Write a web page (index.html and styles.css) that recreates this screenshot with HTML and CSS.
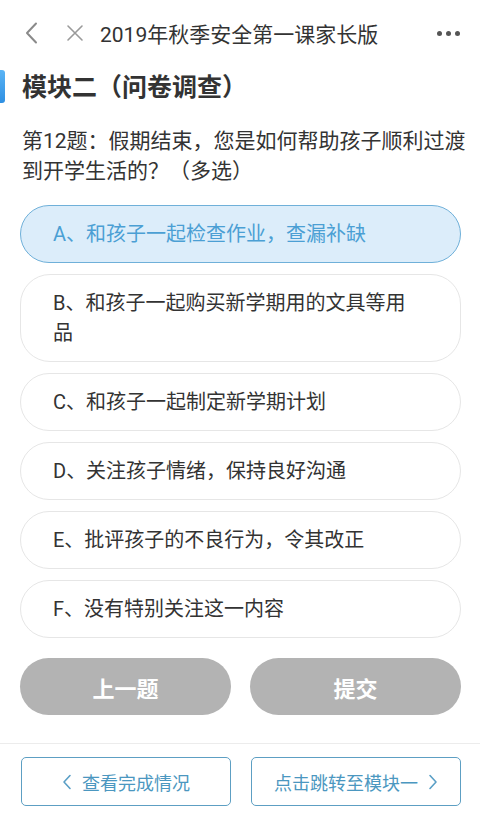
FILE: index.html
```html
<!DOCTYPE html>
<html lang="zh-CN">
<head>
<meta charset="utf-8">
<title>2019年秋季安全第一课家长版</title>
<link rel="stylesheet" href="styles.css">
</head>
<body>
<div class="page">
  <header class="nav">
    <span class="nav-icon back">
      <svg width="14" height="22" viewBox="0 0 14 22"><path d="M12 1.5 L3 11 L12 20.5" fill="none" stroke="#8a8a8a" stroke-width="2" stroke-linecap="round" stroke-linejoin="round"/></svg>
    </span>
    <span class="nav-icon close">
      <svg width="18" height="18" viewBox="0 0 18 18"><path d="M2 2 L16 16 M16 2 L2 16" fill="none" stroke="#9a9a9a" stroke-width="1.6" stroke-linecap="round"/></svg>
    </span>
    <span class="nav-title">2019年秋季安全第一课家长版</span>
    <span class="nav-more"><i></i><i></i><i></i></span>
  </header>

  <h1 class="module"><span class="module-bar"></span><span class="module-text">模块二（问卷调查）</span></h1>

  <p class="question">第12题：假期结束，您是如何帮助孩子顺利过渡到开学生活的？（多选）</p>

  <ul class="options">
    <li class="option selected">A、和孩子一起检查作业，查漏补缺</li>
    <li class="option">B、和孩子一起购买新学期用的文具等用品</li>
    <li class="option">C、和孩子一起制定新学期计划</li>
    <li class="option">D、关注孩子情绪，保持良好沟通</li>
    <li class="option">E、批评孩子的不良行为，令其改正</li>
    <li class="option">F、没有特别关注这一内容</li>
  </ul>

  <div class="actions">
    <button class="btn-gray">上一题</button>
    <button class="btn-gray">提交</button>
  </div>

  <footer class="footer">
    <button class="btn-outline">
      <svg width="10" height="16" viewBox="0 0 10 16"><path d="M8 1.5 L2 8 L8 14.5" fill="none" stroke="#5a9fc6" stroke-width="1.6" stroke-linecap="round" stroke-linejoin="round"/></svg>
      <span>查看完成情况</span>
    </button>
    <button class="btn-outline">
      <span>点击跳转至模块一</span>
      <svg width="10" height="16" viewBox="0 0 10 16"><path d="M2 1.5 L8 8 L2 14.5" fill="none" stroke="#5a9fc6" stroke-width="1.6" stroke-linecap="round" stroke-linejoin="round"/></svg>
    </button>
  </footer>
</div>
</body>
</html>
```

FILE: styles.css
```css
* { box-sizing: border-box; }
html, body {
  margin: 0;
  padding: 0;
  background: #ffffff;
}
body {
  font-family: Roboto, "Noto Sans CJK SC", sans-serif;
  color: #333333;
}
.page {
  width: 480px;
  display: flex;
  flex-direction: column;
}
.nav {
  height: 66px;
  display: flex;
  align-items: center;
  padding: 0 20px 0 24px;
}
.nav-icon {
  display: flex;
  align-items: center;
}
.back { width: 42px; }
.close { width: 34px; }
.nav-title {
  font-size: 21px;
  color: #333;
  flex: 1;
  white-space: nowrap;
}
.nav-more {
  display: flex;
  gap: 4px;
  align-items: center;
}
.nav-more i {
  width: 5px;
  height: 5px;
  border-radius: 50%;
  background: #555;
  display: block;
}
.module {
  margin: 0;
  height: 44px;
  display: flex;
  align-items: center;
  font-size: 25px;
  font-weight: bold;
  color: #333;
}
.module-bar {
  width: 5px;
  height: 33px;
  border-radius: 0 3px 3px 0;
  background: linear-gradient(#5ab4f5, #2e8fe2);
  margin-right: 17px;
  margin-top: -3px;
}
.module-text {
  line-height: 44px;
}
.question {
  margin: 16px 0 0;
  padding: 0 12px 0 22px;
  font-size: 21px;
  line-height: 30px;
  color: #333;
}
.options {
  list-style: none;
  margin: 19px 19px 0 20px;
  padding: 0;
  display: flex;
  flex-direction: column;
  gap: 11px;
}
.option {
  border: 1px solid #e6e6e6;
  border-radius: 30px;
  padding: 13px 40px 13px 32px;
  font-size: 20px;
  line-height: 30px;
  color: #333;
  background: #fff;
}
.option.selected {
  background: #dcedfa;
  border-color: #6fb0d9;
  color: #4b9fd4;
}
.actions {
  margin: 20px 19px 0 20px;
  display: flex;
  gap: 19px;
}
.btn-gray {
  flex: 1;
  height: 57px;
  border: none;
  border-radius: 29px;
  background: #b3b3b3;
  color: #fff;
  font-family: Roboto, "Noto Sans CJK SC", sans-serif;
  font-size: 22px;
  font-weight: bold;
  padding: 0;
}
.footer {
  margin-top: 28px;
  border-top: 1px solid #ececec;
  padding: 13px 19px 0 21px;
  display: flex;
  gap: 20px;
}
.btn-outline {
  flex: 1;
  height: 49px;
  border: 1.5px solid #5d9fc3;
  border-radius: 5px;
  background: #fff;
  color: #4b97c0;
  font-family: Roboto, "Noto Sans CJK SC", sans-serif;
  font-size: 18px;
  display: flex;
  align-items: center;
  justify-content: center;
  gap: 10px;
  padding: 0;
}
```
